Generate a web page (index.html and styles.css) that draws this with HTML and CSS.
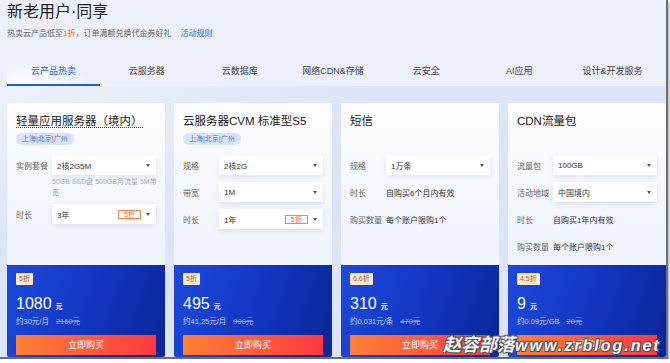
FILE: index.html
```html
<!DOCTYPE html>
<html>
<head>
    <meta charset="utf-8">
    <link rel="stylesheet" href="styles.css">
</head>
<body>

<div class="frame">

    <div class="hero">
        <h1 class="title">新老用户·同享</h1>
        <p class="sub">热卖云产品低至<em>1折</em>，订单满额兑换代金券好礼<a href="#">活动规则</a></p>
        <ul class="tabs">
            <li class="active">云产品热卖</li>
            <li>云服务器</li>
            <li>云数据库</li>
            <li>网络CDN&amp;存储</li>
            <li>云安全</li>
            <li>AI应用</li>
            <li>设计&amp;开发服务</li>
        </ul>
    </div>

    <div class="cards">

        <div class="card">
            <div class="card-top">
                <div class="card-head">
                    <h2 class="card-title"><span class="dotted">轻量应用服务器（境内）</span></h2>
                    <span class="region">上海|北京|广州</span>
                </div>
                <div class="row">
                    <span class="label">实例套餐</span>
                    <div class="select"><span>2核2G5M</span><i class="caret"></i></div>
                </div>
                <p class="hint">50GB SSD盘 500GB月流量 5M带宽</p>
                <div class="row">
                    <span class="label">时长</span>
                    <div class="select"><span>3年</span><span class="off">5折</span><i class="caret"></i></div>
                </div>
            </div>
            <div class="card-bottom">
                <span class="badge">5折</span>
                <div class="price">1080<small>元</small></div>
                <div class="per">约30元/月<s>2160元</s></div>
                <a class="buy" href="#">立即购买</a>
            </div>
        </div>

        <div class="card">
            <div class="card-top">
                <div class="card-head">
                    <h2 class="card-title">云服务器CVM 标准型S5</h2>
                    <span class="region">上海|北京|广州</span>
                </div>
                <div class="row">
                    <span class="label">规格</span>
                    <div class="select"><span>2核2G</span><i class="caret"></i></div>
                </div>
                <div class="row">
                    <span class="label">带宽</span>
                    <div class="select"><span>1M</span><i class="caret"></i></div>
                </div>
                <div class="row">
                    <span class="label">时长</span>
                    <div class="select"><span>1年</span><span class="off">5折</span><i class="caret"></i></div>
                </div>
            </div>
            <div class="card-bottom">
                <span class="badge">5折</span>
                <div class="price">495<small>元</small></div>
                <div class="per">约41.25元/月<s>990元</s></div>
                <a class="buy" href="#">立即购买</a>
            </div>
        </div>

        <div class="card">
            <div class="card-top">
                <div class="card-head">
                    <h2 class="card-title">短信</h2>
                </div>
                <div class="row">
                    <span class="label">规格</span>
                    <div class="select"><span>1万条</span><i class="caret"></i></div>
                </div>
                <div class="row">
                    <span class="label">时长</span>
                    <span class="text">自购买6个月内有效</span>
                </div>
                <div class="row">
                    <span class="label">购买数量</span>
                    <span class="text">每个账户限购1个</span>
                </div>
            </div>
            <div class="card-bottom">
                <span class="badge">6.6折</span>
                <div class="price">310<small>元</small></div>
                <div class="per">约0.031元/条<s>470元</s></div>
                <a class="buy" href="#">立即购买</a>
            </div>
        </div>

        <div class="card">
            <div class="card-top">
                <div class="card-head">
                    <h2 class="card-title">CDN流量包</h2>
                </div>
                <div class="row">
                    <span class="label">流量包</span>
                    <div class="select"><span>100GB</span><i class="caret"></i></div>
                </div>
                <div class="row">
                    <span class="label">活动地域</span>
                    <div class="select"><span>中国境内</span><i class="caret"></i></div>
                </div>
                <div class="row">
                    <span class="label">时长</span>
                    <span class="text">自购买1年内有效</span>
                </div>
                <div class="row">
                    <span class="label">购买数量</span>
                    <span class="text">每个账户限购1个</span>
                </div>
            </div>
            <div class="card-bottom">
                <span class="badge">4.5折</span>
                <div class="price">9<small>元</small></div>
                <div class="per">约0.09元/GB<s>20元</s></div>
                <a class="buy" href="#">立即购买</a>
            </div>
        </div>

    </div>

    <div class="watermark">赵容部落<span>www.zrblog.net</span></div>

</div>

</body>
</html>
```

FILE: styles.css
```css
/* общие стили */

body {
    margin: 0;
    background: #fff;
    font-family: "Liberation Sans", "Noto Sans CJK SC", sans-serif;
}

.frame {
    position: relative;
    width: 666px;
    height: 357px;
    overflow: hidden;
    background: #dde4f7;
    border-right: 2px solid #6e6e6e;
    border-bottom: 2px solid #6e6e6e;
    box-shadow: 2px 2px 2px #c6c6c6;
}

/* шапка */

.hero {
    background: #edf0fb;
    padding: 2px 7px 0;
}

.title {
    margin: 0;
    font-size: 16px;
    line-height: 20px;
    font-weight: normal;
    color: #222;
}

.sub {
    margin: 6px 0 0;
    font-size: 8px;
    line-height: 12px;
    color: #666;
}

.sub em {
    font-style: normal;
    color: #ff6a1a;
}

.sub a {
    margin-left: 9px;
    color: #2f6ae0;
    text-decoration: none;
}

.tabs {
    display: flex;
    list-style: none;
    margin: 18px 0 0;
    padding: 0;
}

.tabs li {
    flex: 1;
    height: 28px;
    box-sizing: border-box;
    line-height: 26px;
    text-align: center;
    font-size: 9px;
    color: #444;
    border-bottom: 2px solid transparent;
}

.tabs li.active {
    color: #2c64e2;
    border-bottom-color: #1f5ce4;
    background: radial-gradient(ellipse at 20% 100%, rgba(255, 255, 255, .9), rgba(255, 255, 255, 0) 60%);
}

/* карточки */

.cards {
    display: flex;
    gap: 9px;
    padding: 17px 0 0 7px;
    background: radial-gradient(ellipse at 0% 0%, #eef1fb, rgba(238, 241, 251, 0) 40%);
}

.card {
    flex: none;
    width: 158px;
    height: 254px;
    display: flex;
    flex-direction: column;
    border-radius: 2px;
    overflow: hidden;
}

.card-top {
    height: 162px;
    box-sizing: border-box;
    padding: 10px 9px 0;
    background: linear-gradient(#fdfdff, #eff2fb);
}

.card-head {
    height: 42px;
}

.card-title {
    margin: 0;
    font-size: 11.5px;
    line-height: 16px;
    font-weight: normal;
    color: #222;
}

.dotted {
    border-bottom: 1px dotted #444;
}

.region {
    display: inline-block;
    vertical-align: top;
    margin-top: 4px;
    height: 12px;
    line-height: 12px;
    padding: 0 6px;
    border-radius: 6px;
    background: #d8e3fb;
    color: #5b7bc0;
    font-size: 7px;
}

.row {
    display: flex;
    align-items: center;
    height: 20px;
    margin-bottom: 7px;
}

.label {
    flex: none;
    width: 36px;
    font-size: 8px;
    color: #666;
}

.text {
    font-size: 8px;
    color: #333;
}

.select {
    flex: 1;
    height: 20px;
    box-sizing: border-box;
    display: flex;
    align-items: center;
    padding: 0 6px 0 5px;
    background: #fff;
    box-shadow: 0 2px 5px rgba(50, 70, 150, .12);
    font-size: 8px;
    color: #333;
}

.caret {
    width: 0;
    height: 0;
    margin-left: auto;
    border-left: 2.5px solid transparent;
    border-right: 2.5px solid transparent;
    border-top: 3px solid #555;
}

.off {
    margin-left: auto;
    margin-right: 5px;
    padding: 0 5px;
    line-height: 7px;
    border: 1px solid #f5854f;
    background: #fff;
    color: #f26a2e;
    font-size: 7px;
}

.off + .caret {
    margin-left: 0;
}

.hint {
    width: 106px;
    margin: -6px 0 6px 36px;
    font-size: 7px;
    line-height: 11px;
    color: #a7adbd;
}

/* нижняя синяя часть */

.card-bottom {
    flex: 1;
    padding: 8px 9px 0;
    background: linear-gradient(110deg, #1b4add 0%, #1337c4 50%, #0a2596 100%);
    color: #fff;
}

.badge {
    display: inline-block;
    vertical-align: top;
    height: 12px;
    line-height: 12px;
    padding: 0 3px;
    border-radius: 1px;
    background: #fde7d6;
    color: #b75a2a;
    font-size: 7px;
}

.price {
    margin-top: 3px;
    font-size: 16px;
    line-height: 20px;
}

.price small {
    margin-left: 4px;
    font-size: 7px;
    font-weight: bold;
}

.per {
    font-size: 7.5px;
    line-height: 10px;
    color: #c9d5ff;
}

.per s {
    margin-left: 7px;
    color: #8ea3e6;
}

.buy {
    display: block;
    margin-top: 8px;
    height: 20px;
    line-height: 20px;
    text-align: center;
    font-size: 9px;
    color: #fff;
    text-decoration: none;
    background: linear-gradient(90deg, #ff8036, #ff3a42);
}

/* водяной знак */

.watermark {
    position: absolute;
    left: 443px;
    top: 334px;
    font-size: 18px;
    line-height: 22px;
    font-weight: bold;
    font-style: italic;
    color: #f3f3f3;
    white-space: nowrap;
    text-shadow: 1px 1px 0 #555, -1px -1px 0 #555, 1px -1px 0 #555, -1px 1px 0 #555;
}

.watermark span {
    font-size: 16px;
    letter-spacing: 2px;
}
```
